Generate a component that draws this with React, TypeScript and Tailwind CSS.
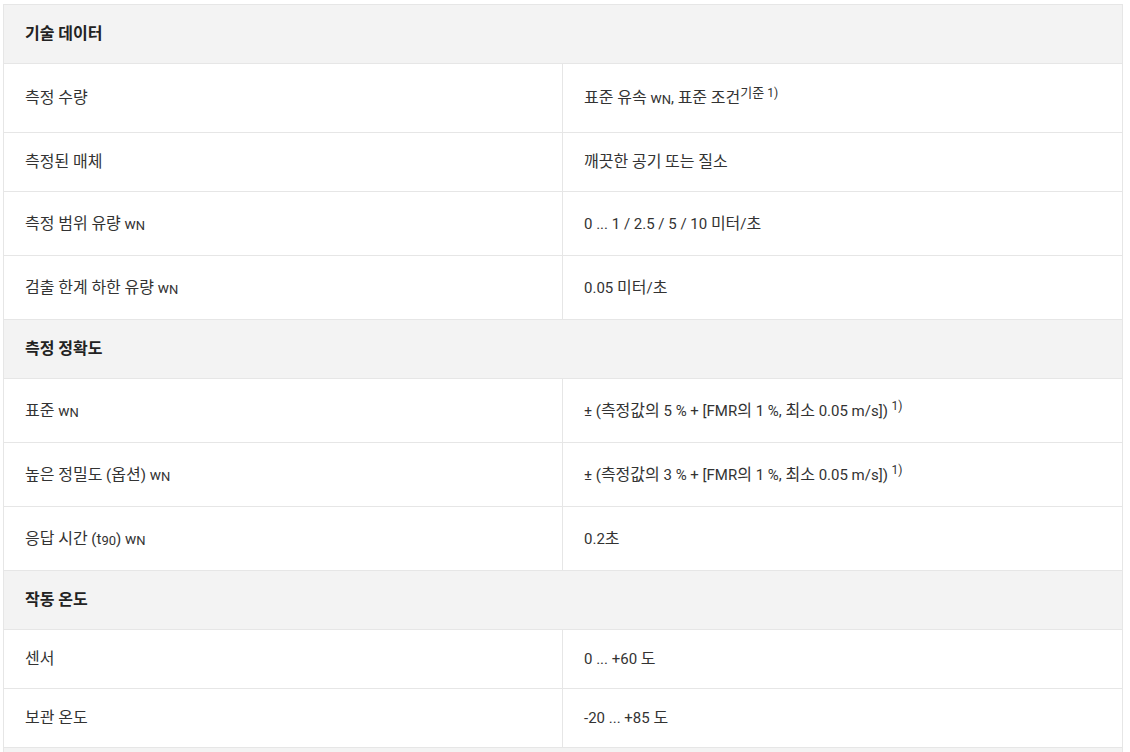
import React from "react";

// Hangul runs are set a touch larger than the Latin text, as in the reference.
const K = (text: string) => {
  const parts = text.split(/([\uAC00-\uD7A3]+)/);
  return (
    <span>
      {parts.map((p, i) =>
        /[\uAC00-\uD7A3]/.test(p) ? (
          <span key={i} className="text-[16px]">
            {p}
          </span>
        ) : (
          <React.Fragment key={i}>{p}</React.Fragment>
        )
      )}
    </span>
  );
};

const Sub = ({ children }: { children: React.ReactNode }) => (
  <sub className="text-[13px] relative top-[1px]">{children}</sub>
);
const WN = () => (
  <span>
    w<Sub>N</Sub>
  </span>
);

type Row =
  | { kind: "head"; label: string; h: string }
  | { kind: "row"; left: React.ReactNode; right: React.ReactNode; h: string };

const rows: Row[] = [
  { kind: "head", label: "기술 데이터", h: "h-[59px]" },
  {
    kind: "row",
    left: K("측정 수량"),
    right: (
      <span>
        {K("표준 유속 ")}
        <WN />, {K("표준 조건")}
        <sup className="text-[12px]">
          <span className="text-[13px]">기준</span> 1)
        </sup>
      </span>
    ),
    h: "h-[69px]",
  },
  { kind: "row", left: K("측정된 매체"), right: K("깨끗한 공기 또는 질소"), h: "h-[59px]" },
  {
    kind: "row",
    left: (
      <span>
        {K("측정 범위 유량 ")}
        <WN />
      </span>
    ),
    right: K("0 ... 1 / 2.5 / 5 / 10 미터/초"),
    h: "h-[64px]",
  },
  {
    kind: "row",
    left: (
      <span>
        {K("검출 한계 하한 유량 ")}
        <WN />
      </span>
    ),
    right: K("0.05 미터/초"),
    h: "h-[64px]",
  },
  { kind: "head", label: "측정 정확도", h: "h-[59px]" },
  {
    kind: "row",
    left: (
      <span>
        {K("표준 ")}
        <WN />
      </span>
    ),
    right: (
      <span>
        {K("± (측정값의 5 % + [FMR의 1 %, 최소 0.05 m/s]) ")}
        <sup className="text-[12px]">1)</sup>
      </span>
    ),
    h: "h-[64px]",
  },
  {
    kind: "row",
    left: (
      <span>
        {K("높은 정밀도 (옵션) ")}
        <WN />
      </span>
    ),
    right: (
      <span>
        {K("± (측정값의 3 % + [FMR의 1 %, 최소 0.05 m/s]) ")}
        <sup className="text-[12px]">1)</sup>
      </span>
    ),
    h: "h-[64px]",
  },
  {
    kind: "row",
    left: (
      <span>
        {K("응답 시간 (t")}
        <Sub>90</Sub>) <WN />
      </span>
    ),
    right: K("0.2초"),
    h: "h-[64px]",
  },
  { kind: "head", label: "작동 온도", h: "h-[59px]" },
  { kind: "row", left: K("센서"), right: K("0 ... +60 도"), h: "h-[59px]" },
  { kind: "row", left: K("보관 온도"), right: K("-20 ... +85 도"), h: "h-[59px]" },
  { kind: "head", label: "", h: "h-[59px]" },
];

export default function App() {
  return (
    <div
      className="w-[1130px] h-[752px] overflow-hidden bg-white pt-[4px] pl-[3px]"
      style={{ fontFamily: '"Roboto", "Noto Sans CJK KR", sans-serif' }}
    >
      <div className="w-[1120px] border-t border-l border-r border-[#e6e6e6] text-[15px] leading-[20px] text-[#333]">
        {rows.map((r, i) =>
          r.kind === "head" ? (
            <div
              key={i}
              className={`${r.h} flex items-center bg-[#f3f3f3] border-b border-[#e6e6e6] pl-[21px] font-bold text-[#222]`}
            >
              {K(r.label)}
            </div>
          ) : (
            <div key={i} className={`${r.h} grid grid-cols-[559px_1fr] border-b border-[#e6e6e6]`}>
              <div className="flex items-center pl-[21px] border-r border-[#e6e6e6]">{r.left}</div>
              <div className="flex items-center pl-[21px]">{r.right}</div>
            </div>
          )
        )}
      </div>
    </div>
  );
}
